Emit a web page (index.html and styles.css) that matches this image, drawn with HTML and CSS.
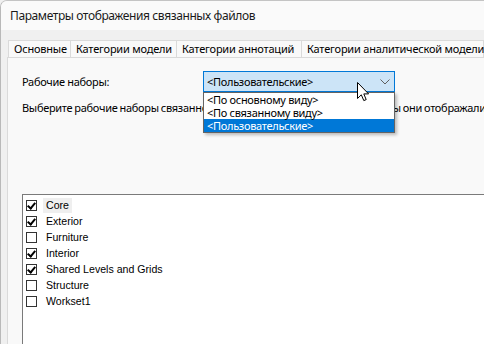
FILE: index.html
```html
<!DOCTYPE html>
<html lang="ru">
<head>
<meta charset="utf-8">
<title>Параметры отображения связанных файлов</title>
<link rel="stylesheet" href="styles.css">
</head>
<body>
<div class="window">
  <div class="titlebar">Параметры отображения связанных файлов</div>
  <div class="client">
    <div class="tabs">
      <div class="tab t1">Основные</div>
      <div class="tab t2">Категории модели</div>
      <div class="tab t3">Категории аннотаций</div>
      <div class="tab t4">Категории аналитической модели</div>
    </div>
    <div class="page">
      <div class="row">
        <div class="label">Рабочие наборы:</div>
        <div class="combo">
          <span class="combo-text">&lt;Пользовательские&gt;</span>
          <svg class="chev" width="10" height="6" viewBox="0 0 10 6"><path d="M0.5 0.5 L5 5 L9.5 0.5" fill="none" stroke="#606060" stroke-width="1"/></svg>
          <div class="dropdown">
            <div class="opt">&lt;По основному виду&gt;</div>
            <div class="opt">&lt;По связанному виду&gt;</div>
            <div class="opt sel">&lt;Пользовательские&gt;</div>
          </div>
          <svg class="cursor" width="13" height="20" viewBox="0 0 13 20"><path d="M0.5 0.5 L0.5 16.5 L4.3 12.8 L6.8 18.6 L9.2 17.6 L6.8 11.9 L11.6 11.9 Z" fill="#fff" stroke="#000" stroke-width="1" stroke-linejoin="miter"/></svg>
        </div>
      </div>
      <p class="desc">Выберите рабочие наборы связанного файла для выбранного вида, чтобы они отображались</p>
      <div class="listbox">
        <div class="item focus"><span class="cb on"></span><span class="txt">Core</span></div>
        <div class="item"><span class="cb on"></span><span class="txt">Exterior</span></div>
        <div class="item"><span class="cb"></span><span class="txt">Furniture</span></div>
        <div class="item"><span class="cb on"></span><span class="txt">Interior</span></div>
        <div class="item"><span class="cb on"></span><span class="txt">Shared Levels and Grids</span></div>
        <div class="item"><span class="cb"></span><span class="txt">Structure</span></div>
        <div class="item"><span class="cb"></span><span class="txt">Workset1</span></div>
      </div>
    </div>
  </div>
</div>
</body>
</html>
```
FILE: styles.css
```css
html, body {
  margin: 0;
  padding: 0;
  width: 484px;
  height: 344px;
  overflow: hidden;
  background: #f0f0f0;
}
body {
  font-family: "Noto Sans", "Open Sans", sans-serif;
  font-size: 11px;
  letter-spacing: -0.3px;
  color: #000;
}
.window {
  width: 484px;
  height: 344px;
  box-sizing: border-box;
  border-left: 1px solid #b9b9b9;
  border-top: 1px solid #c4c4c4;
  border-top-left-radius: 7px;
  background: #f0f0f0;
  overflow: hidden;
}
.titlebar {
  height: 29px;
  line-height: 29px;
  padding-left: 9px;
  background: #fafafa;
  color: #1a1a1a;
  font-size: 12px;
  letter-spacing: -0.4px;
  white-space: nowrap;
}
.client {
  padding-top: 10px;
  padding-left: 6px;
}
.tabs {
  display: flex;
  height: 17px;
  margin-left: 1px;
}
.tab {
  flex: none;
  box-sizing: border-box;
  height: 17px;
  line-height: 16px;
  padding-left: 5px;
  letter-spacing: -0.2px;
  white-space: nowrap;
  background: #f9f9f9;
  border-top: 1px solid #dadada;
  border-right: 1px solid #dadada;
}
.t1 { width: 63px; border-left: 1px solid #dadada; }
.t2 { width: 106px; }
.t3 { width: 125px; }
.t4 { width: 182px; }
.page {
  background: #f9f9f9;
  border-left: 1px solid #dadada;
  border-top: 1px solid #dadada;
  height: 300px;
  padding-left: 14px;
  box-sizing: border-box;
  overflow: hidden;
}
.row {
  display: flex;
  align-items: center;
  margin-top: 13px;
  height: 21px;
}
.label {
  width: 181px;
}
.combo {
  position: relative;
  box-sizing: border-box;
  width: 192px;
  height: 21px;
  background: #cce4f7;
  border: 1px solid #0078d7;
  display: flex;
  align-items: center;
  padding-left: 3px;
  white-space: nowrap;
}
.combo-text {
  flex: 1;
}
.chev {
  margin-right: 4px;
}
.dropdown {
  position: absolute;
  left: -1px;
  top: 20px;
  width: 192px;
  box-sizing: border-box;
  border: 1px solid #646464;
  background: #fff;
  box-shadow: 2px 2px 3px rgba(0,0,0,0.25);
  z-index: 2;
}
.opt {
  height: 13px;
  line-height: 13px;
  padding-left: 3px;
}
.opt.sel {
  background: #0078d7;
  color: #fff;
}
.cursor {
  position: absolute;
  left: 153px;
  top: 10px;
  z-index: 3;
}
.desc {
  margin: 9px 0 0;
  height: 14px;
  line-height: 14px;
  word-spacing: -0.5px;
  white-space: nowrap;
}
.listbox {
  margin-top: 79px;
  width: 480px;
  height: 200px;
  background: #fff;
  border: 1px solid #7a7a7a;
  box-sizing: border-box;
  padding-top: 2px;
  padding-left: 3px;
  font-family: "Liberation Sans", Arial, sans-serif;
  font-size: 10.6px;
  letter-spacing: 0;
}
.item {
  display: flex;
  align-items: center;
  height: 16px;
}
.cb {
  width: 11px;
  height: 11px;
  border: 1px solid #333;
  box-sizing: border-box;
  background: #fff;
  position: relative;
}
.cb.on::after {
  content: "";
  position: absolute;
  left: 2px;
  top: 0px;
  width: 3px;
  height: 6px;
  border-right: 2px solid #000;
  border-bottom: 2px solid #000;
  transform: rotate(40deg);
}
.txt {
  margin-left: 6px;
  padding: 0 3px;
  line-height: 15px;
}
.item.focus .txt {
  background: #efefef;
}
```
